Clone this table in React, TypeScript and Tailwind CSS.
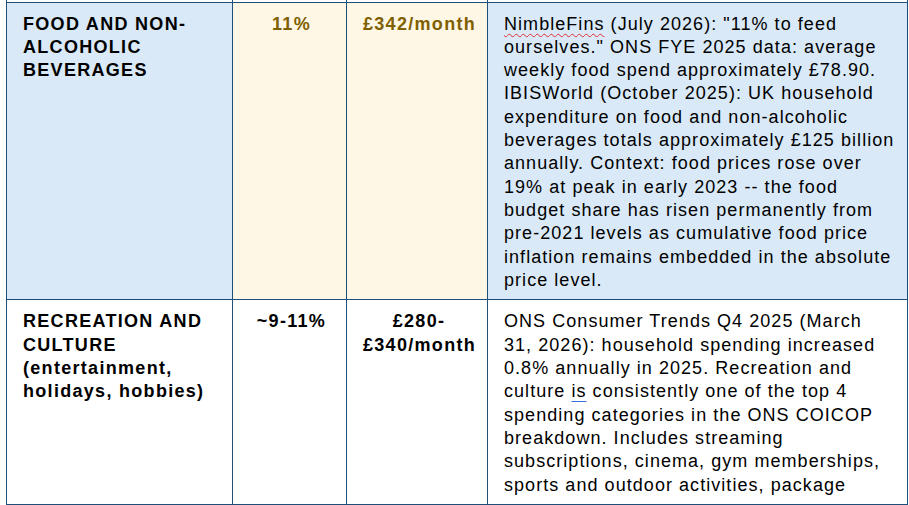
import React from 'react';

const cell = 'border border-[#1f4e79] align-top pl-[16px] pr-[12px] pt-[10px] pb-[7px]';

const App: React.FC = () => {
  return (
    <div className="w-[909px] h-[505px] overflow-hidden bg-white font-['Liberation_Sans',Arial,sans-serif] text-[18px] leading-[23.33px] tracking-[1.05px] text-black">
      <table className="ml-[6px] -mt-[1px] table-fixed border-collapse w-[901px]">
        <colgroup>
          <col className="w-[226px]" />
          <col className="w-[114px]" />
          <col className="w-[141px]" />
          <col className="w-[420px]" />
        </colgroup>
        <tbody>
          {/* tail of the row above */}
          <tr className="h-[3px]">
            <td className="border-x border-[#1f4e79] p-0" />
            <td className="border-x border-[#1f4e79] p-0" />
            <td className="border-x border-[#1f4e79] p-0" />
            <td className="border-x border-[#1f4e79] p-0" />
          </tr>

          {/* Food row */}
          <tr>
            <td className={`${cell} bg-[#d9e9f7] font-bold tracking-[1.3px]`}>FOOD AND NON-ALCOHOLIC BEVERAGES</td>
            <td className={`${cell} bg-[#fff7e5] font-bold tracking-[1.3px] text-center text-[#7f6000]`}>11%</td>
            <td className={`${cell} bg-[#fff7e5] font-bold tracking-[1.3px] text-center text-[#7f6000]`}>£342/month</td>
            <td className={`${cell} bg-[#d9e9f7]`}>
              <span className="underline decoration-wavy decoration-[#e03030] decoration-1 underline-offset-[3px]">NimbleFins</span> (July 2026): "11% to feed ourselves." ONS FYE 2025 data: average weekly food spend approximately £78.90. IBISWorld (October 2025): UK household expenditure on food and non-alcoholic beverages totals approximately £125 billion annually. Context: food prices rose over 19% at peak in early 2023 -- the food budget share has risen permanently from pre-2021 levels as cumulative food price inflation remains embedded in the absolute price level.
            </td>
          </tr>

          {/* Recreation row */}
          <tr>
            <td className={`${cell} font-bold tracking-[1.3px]`}>
              RECREATION AND CULTURE
              <br />
              (entertainment, holidays, hobbies)
            </td>
            <td className={`${cell} font-bold tracking-[1.3px] text-center`}>~9-11%</td>
            <td className={`${cell} font-bold tracking-[1.3px] text-center`}>£280-£340/month</td>
            <td className={cell}>
              ONS Consumer Trends Q4 2025 (March 31, 2026): household spending increased 0.8% annually in 2025. Recreation and culture{' '}
              <span className="underline decoration-[#3b6fd4] decoration-1 underline-offset-[4px]">is</span> consistently one of the top 4 spending categories in the ONS COICOP breakdown. Includes streaming subscriptions, cinema, gym memberships, sports and outdoor activities, package
            </td>
          </tr>
        </tbody>
      </table>
    </div>
  );
};

export default App;
